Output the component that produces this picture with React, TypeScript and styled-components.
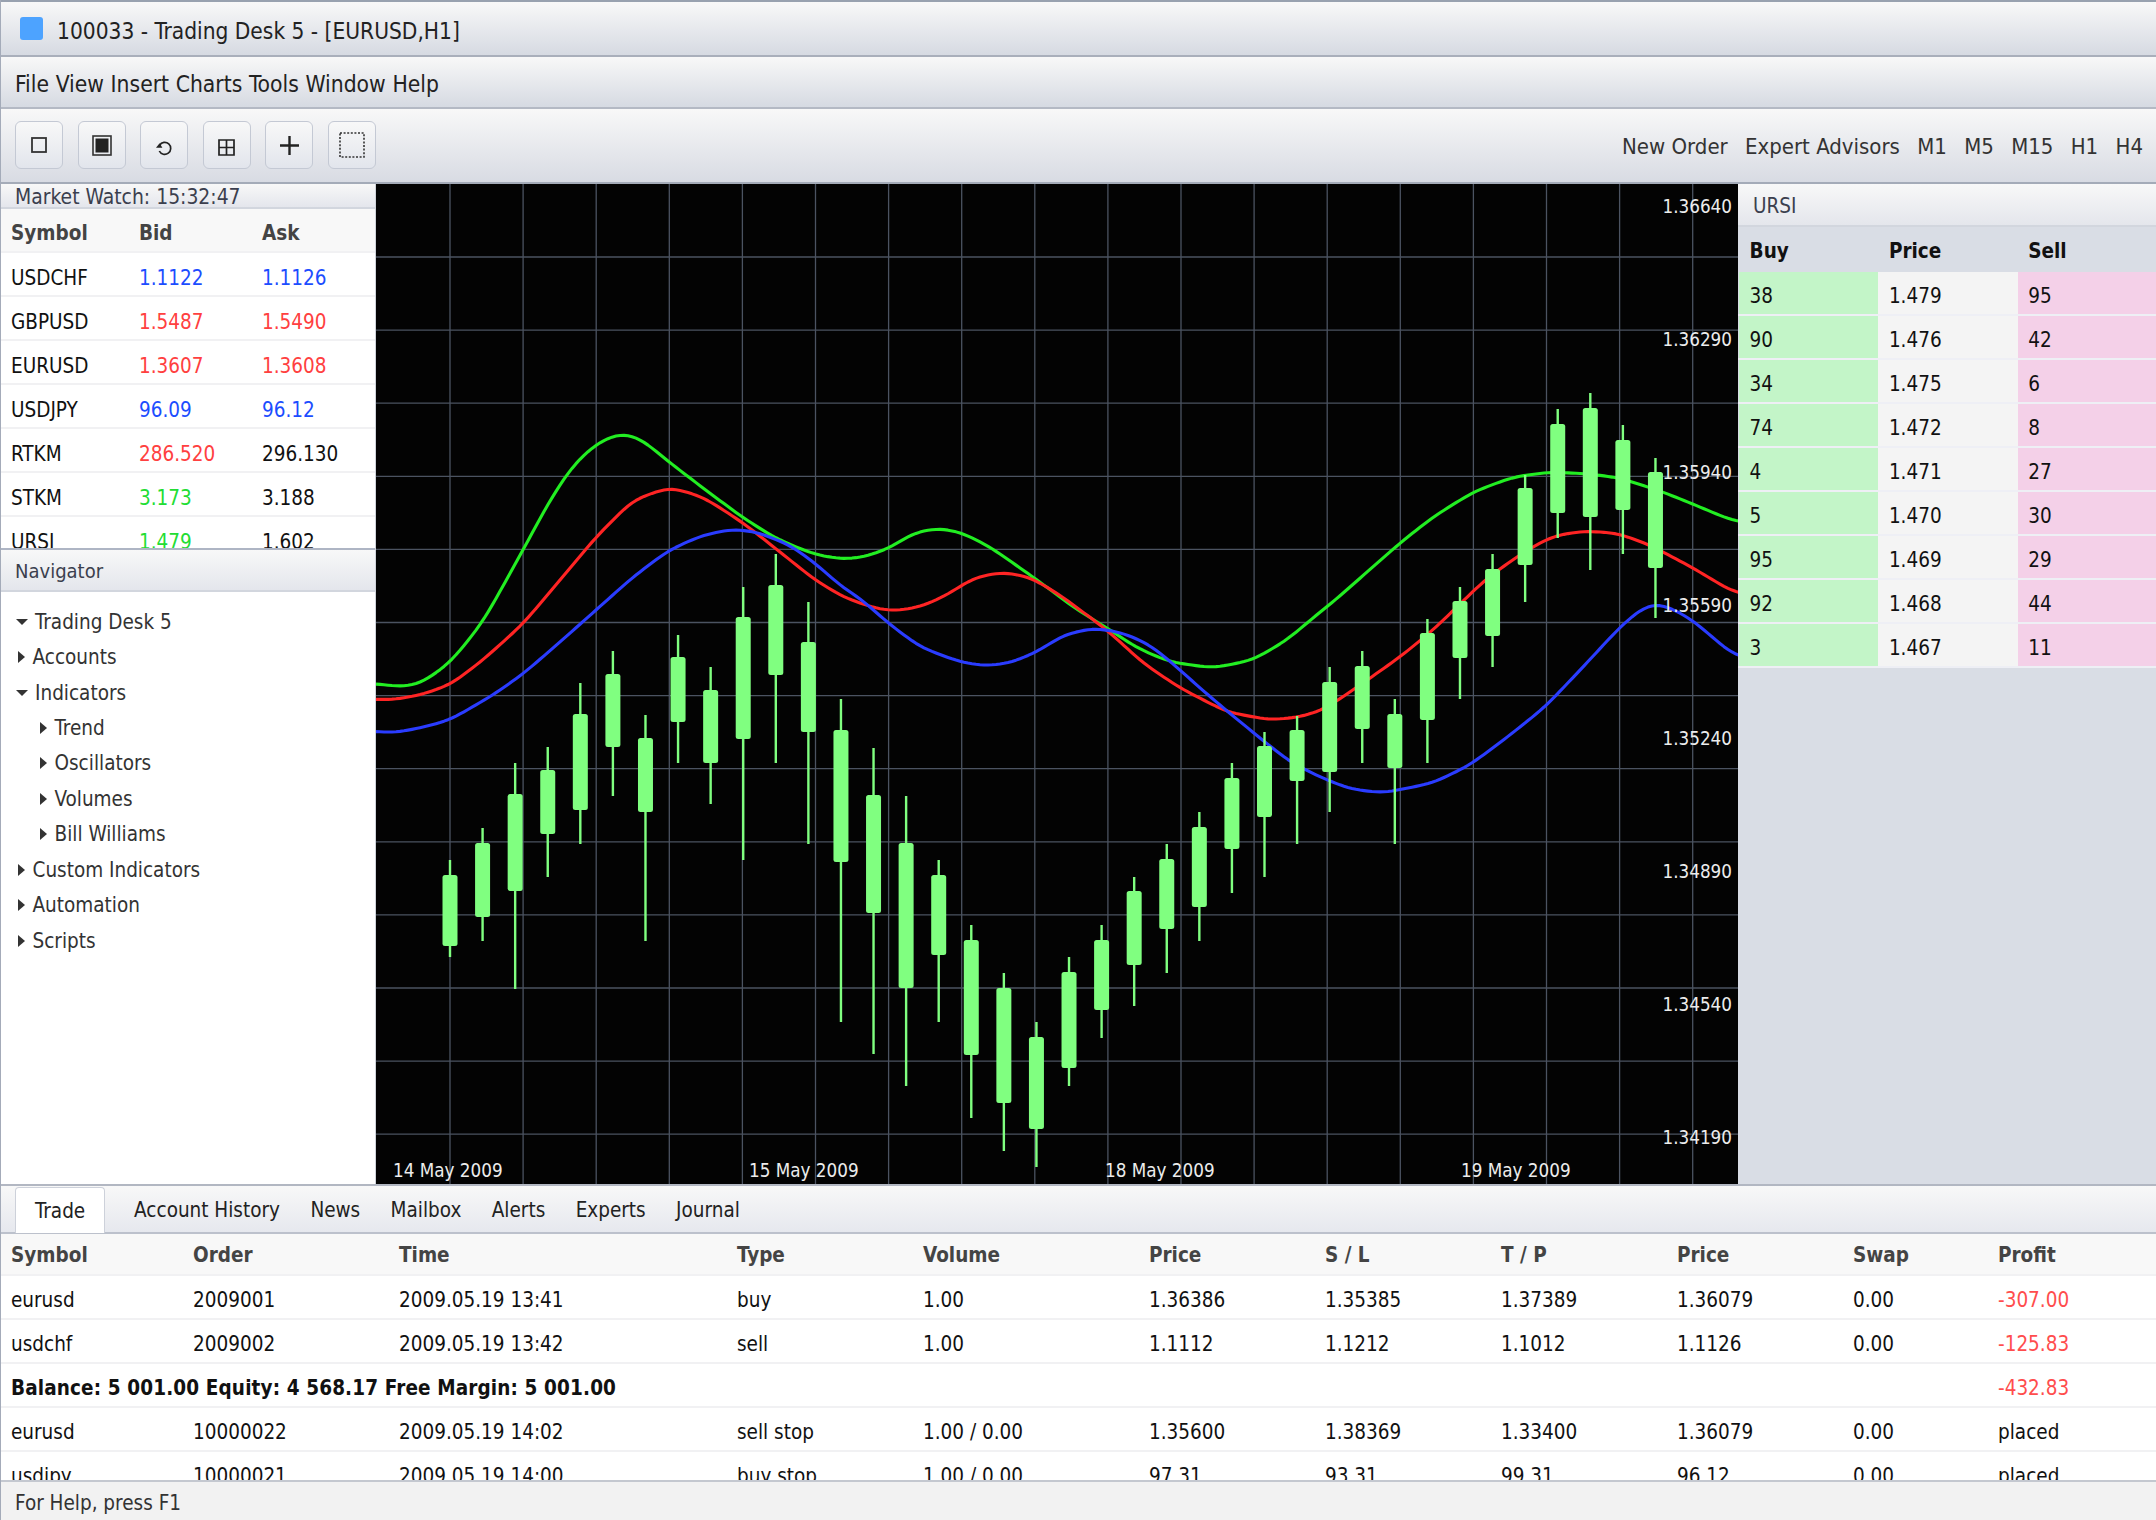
import React from "react";
import styled, { createGlobalStyle } from "styled-components";

const FONT = `"DejaVu Sans Condensed", "DejaVu Sans", "Liberation Sans", sans-serif`;

const Global = createGlobalStyle`
  html, body { margin: 0; padding: 0; background: #fff; overflow: hidden; }
  * { box-sizing: border-box; }
  #root { width: 2156px; height: 1520px; }
`;

const Shell = styled.div`
  width: 2156px; height: 1520px; display: flex; flex-direction: column; overflow: hidden;
  font-family: ${FONT}; font-stretch: condensed; font-size: 20.5px; color: #222;
  border-left: 1px solid #a4abb9;
`;
const barBg = `linear-gradient(#f8f8f8, #d6dae2)`;
const TitleBar = styled.div`
  height: 57px; flex: none; display: flex; align-items: center; padding-left: 19px; gap: 14px;
  background: ${barBg}; border-top: 2px solid #98a1af; border-bottom: 2px solid #a9afbb; font-size: 22.5px; color: #222;
`;
const TitleText = styled.span` padding-top: 5px; `;
const AppIcon = styled.span`
  width: 23px; height: 23px; border-radius: 3px; background: #4da3ff; flex: none;
`;
const MenuBar = styled.div`
  height: 52px; flex: none; display: flex; align-items: center; gap: 6.7px; padding: 3px 0 0 14px;
  background: ${barBg}; border-bottom: 2px solid #b4b9c4; font-size: 22.65px;
`;
const Toolbar = styled.div`
  height: 75px; flex: none; display: flex; align-items: center; justify-content: space-between;
  padding: 0 13px 1px 14px; background: linear-gradient(#f8f8f8, #d8dbe3); border-bottom: 2px solid #a4abb8;
`;
const ToolGroup = styled.div` display: flex; gap: 14.6px; `;
const ToolButton = styled.div`
  width: 48px; height: 48px; border: 1px solid #c4c9d4; border-radius: 6px; display: flex; align-items: center; justify-content: center;
  background: linear-gradient(#f8f8f8, #e2e5ec);
  svg { display: block; }
`;
const ToolLinks = styled.div` display: flex; gap: 17.3px; color: #333; font-size: 22px; padding-top: 2px; `;

const Main = styled.div` flex: none; height: 1002px; display: flex; border-bottom: 2px solid #b2b7c2; `;
const LeftPanel = styled.div`
  width: 375px; flex: none; display: flex; flex-direction: column; border-right: 1px solid #cfd3da; background: #fff;
`;
const PaneTitle = styled.div<{ $h: number; $pad?: number; $size?: number; $top?: number }>`
  height: ${(p) => p.$h}px; flex: none; display: flex; align-items: center;
  padding: ${(p) => p.$top ?? 0}px 0 0 ${(p) => p.$pad ?? 14}px;
  font-size: ${(p) => p.$size ?? 20.5}px;
  background: linear-gradient(#f8f8f8, #e4e6ec); border-bottom: 2px solid #d2d6de; color: #3b3f4e;
`;
const WatchScroll = styled.div` height: 339px; flex: none; overflow: hidden; `;
const WatchRow = styled.div<{ $head?: boolean }>`
  height: 44px; display: grid; grid-template-columns: 128px 123px 1fr; align-items: center; padding-left: 10px;
  padding-top: ${(p) => (p.$head ? 5 : 8)}px;
  border-bottom: 2px solid #f1f1f3;
  background: ${(p) => (p.$head ? "#f8f8f8" : "#fff")};
  font-weight: ${(p) => (p.$head ? 700 : 400)};
  color: ${(p) => (p.$head ? "#444" : "#111")};
`;
const Quote = styled.span<{ $c: string }>`
  color: ${(p) => ({ b: "#1c4dff", r: "#ff4040", g: "#22dd33", k: "#111" } as Record<string, string>)[p.$c]};
`;
const NavTitle = styled(PaneTitle)` border-top: 2px solid #aeb5c4; `;
const Tree = styled.div` padding-top: 12px; flex: 1; `;
const TreeRow = styled.div<{ $level: number; $open?: boolean }>`
  height: 35.45px; display: flex; align-items: center; color: #333;
  padding-left: ${(p) => (p.$level ? 39 : p.$open ? 15 : 17)}px;
  gap: ${(p) => (p.$open ? 7 : 7.5)}px;
`;
const Caret = styled.span<{ $open?: boolean }>`
  width: 0; height: 0; flex: none;
  ${(p) =>
    p.$open
      ? "border-left: 6px solid transparent; border-right: 6px solid transparent; border-top: 6px solid #333;"
      : "border-top: 6px solid transparent; border-bottom: 6px solid transparent; border-left: 7px solid #333;"}
`;

const ChartPane = styled.div` flex: 1; min-width: 0; background: #030303; `;
const ChartSvg = styled.svg` display: block; width: 100%; height: 100%; `;
const AxisText = styled.text`
  font-family: ${FONT}; font-stretch: condensed; font-size: 18.7px; fill: #ececec;
`;

const RightPanel = styled.div` width: 418px; flex: none; background: #d9dde5; `;
const BookRow = styled.div<{ $head?: boolean }>`
  height: ${(p) => (p.$head ? 45 : 44)}px; display: grid; grid-template-columns: 139.3px 139.3px 1fr; color: #111;
  font-weight: ${(p) => (p.$head ? 700 : 400)};
  padding-left: 1px;
  ${(p) => (p.$head ? "" : "border-bottom: 2px solid #eeeff5;")}
`;
const BookCell = styled.div<{ $bg?: string; $head?: boolean }>`
  display: flex; align-items: center; padding: ${(p) => (p.$head ? 2 : 6)}px 0 0 10.6px; background: ${(p) => p.$bg ?? "transparent"};
`;

const BottomPane = styled.div` flex: 1; display: flex; flex-direction: column; min-height: 0; `;
const TabBar = styled.div`
  height: 48px; flex: none; display: flex; align-items: stretch; gap: 30.4px; padding: 1px 0 0 14px;
  background: linear-gradient(#f8f8f8, #e6e8ee); border-bottom: 2px solid #bcc1cc;
`;
const Tab = styled.div<{ $active?: boolean }>`
  display: flex; align-items: center; color: #222;
  ${(p) =>
    p.$active
      ? "background: #fff; padding: 0 19px; margin-right: -1.5px; margin-bottom: -1px; border: 1px solid #cdd1da; border-bottom: none; border-radius: 4px 4px 0 0;"
      : ""}
`;
const TableScroll = styled.div` flex: 1; min-height: 0; overflow: hidden; `;
const COLS = "182px 206px 338px 186px 226px 176px 176px 176px 176px 145px 1fr";
const TableRow = styled.div<{ $head?: boolean }>`
  display: grid; grid-template-columns: ${COLS}; align-items: center; padding-left: 10px;
  padding-top: ${(p) => (p.$head ? 2 : 6)}px;
  height: ${(p) => (p.$head ? 42 : 44)}px;
  background: ${(p) => (p.$head ? "#f8f8f8" : "#fff")};
  color: ${(p) => (p.$head ? "#444" : "#111")};
  font-weight: ${(p) => (p.$head ? 700 : 400)};
  border-bottom: 2px solid #f1f1f3;
`;
const SummaryText = styled.div` grid-column: 1 / 10; font-weight: 700; color: #111; letter-spacing: 0.13px; `;
const Profit = styled.div` color: #ff4d4d; `;
const StatusBar = styled.div`
  height: 40px; flex: none; display: flex; align-items: center; padding: 4px 0 0 14px; background: #f2f2f2;
  border-top: 2px solid #c4c8d0; color: #333;
`;

type Pt = [number, number];
const P = (s: string): Pt[] =>
  s.split(" ").map((p) => p.split(",").map(Number) as Pt);

// Resample the measured points on an even x step and low-pass them, so the
// indicator lines read as the smooth moving averages they are.
function smooth(pts: Pt[]) {
  const step = 4;
  const xs: number[] = [];
  const ys: number[] = [];
  let seg = 0;
  for (let x = pts[0][0]; x <= pts[pts.length - 1][0] + step; x += step) {
    while (seg < pts.length - 2 && x > pts[seg + 1][0]) seg++;
    const [x0, y0] = pts[seg];
    const [x1, y1] = pts[seg + 1];
    xs.push(x);
    ys.push(y0 + ((y1 - y0) * (x - x0)) / (x1 - x0));
  }
  const sigma = 9 / step;
  const radius = Math.ceil(sigma * 3);
  const out = ys.map((_, i) => {
    let sum = 0;
    let w = 0;
    for (let k = -radius; k <= radius; k++) {
      const j = i + k;
      if (j < 0 || j >= ys.length) continue;
      const g = Math.exp(-(k * k) / (2 * sigma * sigma));
      sum += ys[j] * g;
      w += g;
    }
    return sum / w;
  });
  return "M" + out.map((y, i) => `${xs[i]} ${y.toFixed(2)}`).join("L");
}

const GREEN = P("376,683 398,687 420,684 450,663 483,622 523,550 550,500 573,465 597,443 620,433 640,438 669,462 703,488 742,517 775,538 813,554 840,559 860,558 888,549 913,533 938,528 960,532 987,545 1013,563 1040,582 1073,607 1107,628 1137,648 1170,662 1213,668 1253,660 1287,640 1320,612 1333,602 1400,543 1433,517 1473,492 1513,477 1550,472 1590,474 1620,478 1663,492 1700,507 1738,523");
const RED = P("376,699 392,700 420,695 450,685 483,660 523,624 560,580 596,537 633,500 670,487 703,497 742,522 775,548 815,580 843,597 860,603 877,609 897,611 923,606 947,595 973,578 1002,572 1030,577 1060,595 1107,630 1143,663 1180,688 1227,712 1270,720 1300,717 1323,710 1353,690 1400,657 1433,630 1487,578 1527,550 1553,536 1583,531 1617,533 1650,545 1693,568 1738,595");
const BLUE = P("376,731 393,733 420,728 450,720 493,695 523,674 560,642 596,610 633,577 669,550 703,535 733,529 757,532 790,545 815,563 843,588 860,598 888,623 920,647 960,662 985,666 1010,663 1037,652 1063,635 1093,628 1120,632 1147,643 1170,661 1200,688 1227,711 1260,738 1290,762 1320,777 1350,789 1383,793 1433,783 1470,765 1510,735 1545,707 1583,667 1620,627 1643,607 1660,603 1690,618 1738,659");

// high, body top, body bottom, low
const CANDLES: number[][] = [
  [860,875,946,957],[828,843,917,941],[763,794,891,989],[747,770,834,877],[683,714,810,844],
  [651,674,747,796],[715,738,812,941],[635,657,722,763],[667,690,763,804],[587,617,739,860],
  [554,585,675,763],[602,642,732,844],[699,730,862,1022],[748,795,913,1054],[796,843,988,1086],
  [860,875,955,1022],[925,940,1055,1118],[973,988,1103,1151],[1022,1037,1129,1167],[957,972,1068,1086],
  [925,940,1010,1038],[877,891,965,1006],[844,859,929,973],[812,827,907,941],[763,778,849,893],
  [732,746,817,877],[716,730,781,844],[667,682,772,812],[651,666,729,763],[699,714,768,844],
  [619,633,720,763],[587,601,658,699],[554,569,636,667],[475,488,565,602],[409,424,513,538],
  [393,408,517,570],[425,440,510,554],[458,472,568,618],
];
const hLines = Array.from({ length: 13 }, (_, i) => 257 + 73.1 * i);
const vLines = Array.from({ length: 18 }, (_, i) => 450 + 73.1 * i);
const PRICES = ["1.36640","1.36290","1.35940","1.35590","1.35240","1.34890","1.34540","1.34190"];
const DATES = ["14 May 2009","15 May 2009","18 May 2009","19 May 2009"];

const WATCH = [
  ["USDCHF","1.1122","1.1126","b","b"],["GBPUSD","1.5487","1.5490","r","r"],["EURUSD","1.3607","1.3608","r","r"],
  ["USDJPY","96.09","96.12","b","b"],["RTKM","286.520","296.130","r","k"],["STKM","3.173","3.188","g","k"],["URSI","1.479","1.602","g","k"],
];
const BOOK = [[38,"1.479",95],[90,"1.476",42],[34,"1.475",6],[74,"1.472",8],[4,"1.471",27],[5,"1.470",30],[95,"1.469",29],[92,"1.468",44],[3,"1.467",11]];
const TREE: [string, number, boolean][] = [
  ["Trading Desk 5",0,true],["Accounts",0,false],["Indicators",0,true],["Trend",1,false],["Oscillators",1,false],
  ["Volumes",1,false],["Bill Williams",1,false],["Custom Indicators",0,false],["Automation",0,false],["Scripts",0,false],
];
const HEAD = ["Symbol","Order","Time","Type","Volume","Price","S / L","T / P","Price","Swap","Profit"];
const ORDERS_A = [
  ["eurusd","2009001","2009.05.19 13:41","buy","1.00","1.36386","1.35385","1.37389","1.36079","0.00","-307.00"],
  ["usdchf","2009002","2009.05.19 13:42","sell","1.00","1.1112","1.1212","1.1012","1.1126","0.00","-125.83"],
];
const ORDERS_B = [
  ["eurusd","10000022","2009.05.19 14:02","sell stop","1.00 / 0.00","1.35600","1.38369","1.33400","1.36079","0.00","placed"],
  ["usdjpy","10000021","2009.05.19 14:00","buy stop","1.00 / 0.00","97.31","93.31","99.31","96.12","0.00","placed"],
];

const Chart = () => (
  <ChartSvg viewBox="376 184 1362 1000" preserveAspectRatio="none">
    {hLines.map((y) => <line key={y} x1={376} x2={1738} y1={y} y2={y} stroke="#4b5361" strokeWidth={1.3} />)}
    {vLines.map((x) => <line key={x} x1={x} x2={x} y1={184} y2={1184} stroke="#4b5361" strokeWidth={1.3} />)}
    <path d={smooth(GREEN)} fill="none" stroke="#22ee22" strokeWidth={3.1} strokeLinejoin="round" />
    <path d={smooth(RED)} fill="none" stroke="#ff2424" strokeWidth={3.1} strokeLinejoin="round" />
    <path d={smooth(BLUE)} fill="none" stroke="#2a3cff" strokeWidth={3.1} strokeLinejoin="round" />
    {CANDLES.map((c, i) => {
      const x = 450 + 32.58 * i;
      return (
        <g key={i} fill="#80ff80">
          <rect x={x - 1.2} y={c[0]} width={2.4} height={c[3] - c[0]} />
          <rect x={x - 7.5} y={c[1]} width={15} height={c[2] - c[1]} rx={2.5} />
        </g>
      );
    })}
    {PRICES.map((p, i) => <AxisText key={p} x={1732} y={213.3 + i * 133} textAnchor="end">{p}</AxisText>)}
    {DATES.map((d, i) => <AxisText key={d} x={393 + i * 356} y={1176.5}>{d}</AxisText>)}
  </ChartSvg>
);

const Icons = [
  <svg width="16" height="16" viewBox="0 0 16 16"><rect x="1" y="1" width="14" height="14" fill="none" stroke="#333" strokeWidth="1.8" /></svg>,
  <svg width="20" height="21" viewBox="0 0 20 21"><rect x="1" y="1" width="18" height="19" fill="none" stroke="#333" strokeWidth="1.6" /><rect x="3.5" y="3.5" width="13" height="14" fill="#222" /></svg>,
  <svg width="17" height="15" viewBox="0 0 17 15" style={{ marginTop: 6 }}><path d="M3.6 4.2A6 6 0 1 1 3.3 10" fill="none" stroke="#222" strokeWidth="1.7" /><path d="M0 6.8H6.4L3.6 2.2Z" fill="#222" /></svg>,
  <svg width="17" height="17" viewBox="0 0 17 17" style={{ marginTop: 4 }}><path d="M1 1H16V16H1ZM8.5 1V16M1 8.5H16" fill="none" stroke="#222" strokeWidth="1.7" /></svg>,
  <svg width="19" height="19" viewBox="0 0 19 19"><path d="M9.5 0V19M0 9.5H19" fill="none" stroke="#222" strokeWidth="2.4" /></svg>,
  <svg width="26" height="26" viewBox="0 0 26 26"><rect x="1" y="1" width="24" height="24" fill="none" stroke="#333" strokeWidth="1.6" strokeDasharray="2 1.6" /></svg>,
];

export default function App() {
  return (
    <Shell>
      <Global />
      <TitleBar><AppIcon /><TitleText>100033 - Trading Desk 5 - [EURUSD,H1]</TitleText></TitleBar>
      <MenuBar>
        {["File","View","Insert","Charts","Tools","Window","Help"].map((m) => <span key={m}>{m}</span>)}
      </MenuBar>
      <Toolbar>
        <ToolGroup>{Icons.map((ic, i) => <ToolButton key={i}>{ic}</ToolButton>)}</ToolGroup>
        <ToolLinks>
          {["New Order","Expert Advisors","M1","M5","M15","H1","H4"].map((t) => <span key={t}>{t}</span>)}
        </ToolLinks>
      </Toolbar>
      <Main>
        <LeftPanel>
          <PaneTitle $h={25} $size={20.9} $top={3}>Market Watch: 15:32:47</PaneTitle>
          <WatchScroll>
            <WatchRow $head><span>Symbol</span><span>Bid</span><span>Ask</span></WatchRow>
            {WATCH.map((r) => (
              <WatchRow key={r[0]}>
                <span>{r[0]}</span><Quote $c={r[3]}>{r[1]}</Quote><Quote $c={r[4]}>{r[2]}</Quote>
              </WatchRow>
            ))}
          </WatchScroll>
          <NavTitle $h={44} $size={20} $top={1}>Navigator</NavTitle>
          <Tree>
            {TREE.map(([t, l, o]) => (
              <TreeRow key={t} $level={l} $open={o}><Caret $open={o} /><span>{t}</span></TreeRow>
            ))}
          </Tree>
        </LeftPanel>
        <ChartPane><Chart /></ChartPane>
        <RightPanel>
          <PaneTitle $h={43} $pad={15} $top={2}>URSI</PaneTitle>
          <BookRow $head><BookCell $head>Buy</BookCell><BookCell $head>Price</BookCell><BookCell $head>Sell</BookCell></BookRow>
          {BOOK.map((b) => (
            <BookRow key={b[1]}>
              <BookCell $bg="#c3f5c8">{b[0]}</BookCell>
              <BookCell $bg="#f4f4f4">{b[1]}</BookCell>
              <BookCell $bg="#f4d0e8">{b[2]}</BookCell>
            </BookRow>
          ))}
        </RightPanel>
      </Main>
      <BottomPane>
        <TabBar>
          <Tab $active>Trade</Tab>
          {["Account History","News","Mailbox","Alerts","Experts","Journal"].map((t) => <Tab key={t}>{t}</Tab>)}
        </TabBar>
        <TableScroll>
          <TableRow $head>{HEAD.map((h, i) => <div key={i}>{h}</div>)}</TableRow>
          {ORDERS_A.map((r) => (
            <TableRow key={r[1]}>
              {r.slice(0, 10).map((c, i) => <div key={i}>{c}</div>)}
              <Profit>{r[10]}</Profit>
            </TableRow>
          ))}
          <TableRow>
            <SummaryText>Balance: 5 001.00 Equity: 4 568.17 Free Margin: 5 001.00</SummaryText>
            <div />
            <Profit>-432.83</Profit>
          </TableRow>
          {ORDERS_B.map((r) => (
            <TableRow key={r[1]}>{r.map((c, i) => <div key={i}>{c}</div>)}</TableRow>
          ))}
        </TableScroll>
        <StatusBar>For Help, press F1</StatusBar>
      </BottomPane>
    </Shell>
  );
}
